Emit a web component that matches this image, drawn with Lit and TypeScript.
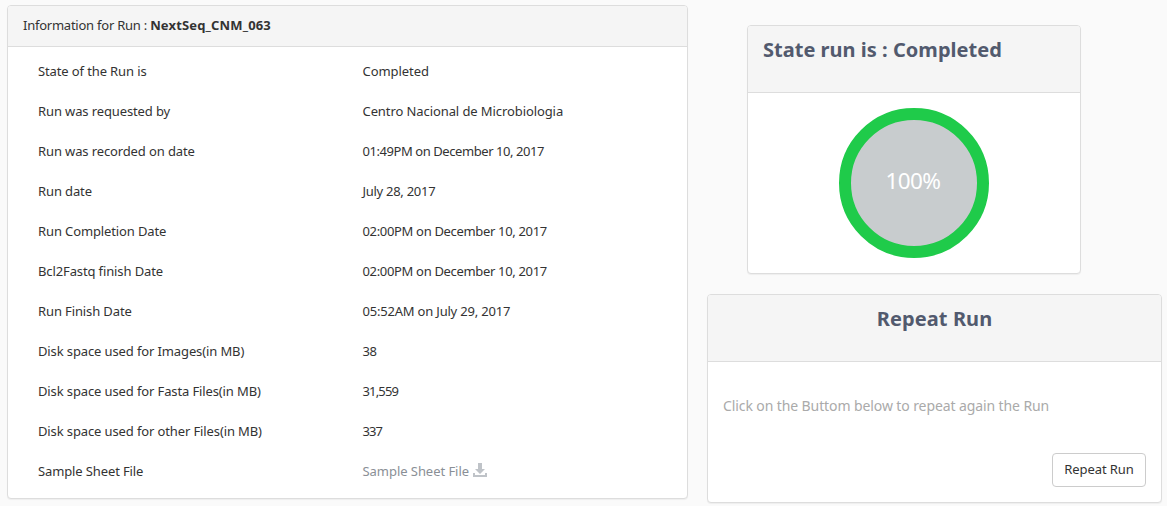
import { LitElement, html, css, svg } from "lit";
import { customElement, property } from "lit/decorators.js";
import { styleMap } from "lit/directives/style-map.js";

interface Row {
  label: string;
  value: string;
  tracking?: number;
  file?: boolean;
}

const rows: Row[] = [
  { label: "State of the Run is", value: "Completed", tracking: -0.05 },
  { label: "Run was requested by", value: "Centro Nacional de Microbiologia", tracking: -0.09 },
  { label: "Run was recorded on date", value: "01:49PM on December 10, 2017", tracking: -0.43 },
  { label: "Run date", value: "July 28, 2017", tracking: -0.28 },
  { label: "Run Completion Date", value: "02:00PM on December 10, 2017", tracking: -0.33 },
  { label: "Bcl2Fastq finish Date", value: "02:00PM on December 10, 2017", tracking: -0.33 },
  { label: "Run Finish Date", value: "05:52AM on July 29, 2017", tracking: -0.2 },
  { label: "Disk space used for Images(in MB)", value: "38", tracking: -0.5 },
  { label: "Disk space used for Fasta Files(in MB)", value: "31,559", tracking: -0.85 },
  { label: "Disk space used for other Files(in MB)", value: "337", tracking: -0.9 },
  { label: "Sample Sheet File", value: "Sample Sheet File", file: true },
];

@customElement("run-panel")
class RunPanel extends LitElement {
  static styles = css`
    :host {
      display: flex;
      flex-direction: column;
      box-sizing: border-box;
      background: #fff;
      border: 1px solid #ddd;
      border-radius: 4px;
      box-shadow: 0 1px 1px rgba(0, 0, 0, 0.05);
      overflow: hidden;
    }
    .head {
      box-sizing: border-box;
      background: #f5f5f5;
      border-bottom: 1px solid #ddd;
      padding: var(--head-top, 10px) 15px 0;
      height: var(--head-height, 67px);
    }
    .body {
      flex: 1;
      display: flex;
      flex-direction: column;
    }
  `;
  render() {
    return html`<div class="head"><slot name="head"></slot></div>
      <div class="body"><slot></slot></div>`;
  }
}

@customElement("progress-ring")
class ProgressRing extends LitElement {
  @property({ type: Number }) value = 0;
  static styles = css`
    :host {
      display: flex;
      align-items: center;
      justify-content: center;
      box-sizing: border-box;
      width: 150px;
      height: 150px;
      border: 12px solid #1fcb4a;
      border-radius: 50%;
      background: #c8ccce;
      color: #fff;
      font-size: 22.5px;
      line-height: 30px;
      padding: 0 2px 4px 0;
      letter-spacing: -0.6px;
    }
  `;
  render() {
    return html`<span>${this.value}%</span>`;
  }
}

@customElement("app-root")
class AppRoot extends LitElement {
  static styles = css`
    :host {
      display: flex;
      align-items: flex-start;
      box-sizing: border-box;
      width: 1167px;
      height: 506px;
      padding: 5px 5px 0 7px;
      gap: 19px;
      overflow: hidden;
      background: #fafafa;
      color: #333;
      font: 13px/20px "Noto Sans", sans-serif;
      letter-spacing: -0.12px;
    }
    .info {
      --head-height: 41px;
      --head-top: 9px;
      width: 681px;
      height: 494px;
    }
    .lead {
      letter-spacing: -0.24px;
    }
    .name {
      letter-spacing: 0.15px;
    }
    .rows {
      display: grid;
      grid-template-columns: 324.5px 1fr;
      grid-auto-rows: 40px;
      align-items: center;
      padding: 4px 0 0 30px;
    }
    .side {
      width: 455px;
      padding-top: 20px;
      display: flex;
      flex-direction: column;
      gap: 20px;
    }
    .state {
      width: 334px;
      height: 249px;
      margin-left: 40px;
    }
    .ring {
      margin: 15px auto 0;
    }
    .repeat {
      height: 209px;
    }
    .title {
      font-size: 20px;
      line-height: 28px;
      font-weight: 700;
      color: #525a6e;
      letter-spacing: 0.02px;
    }
    .centered {
      text-align: center;
      letter-spacing: 0.1px;
    }
    .hint {
      font-size: 14px;
      line-height: 24px;
      color: #aaa;
      padding: 32px 15px 0;
      letter-spacing: -0.1px;
    }
    .actions {
      display: flex;
      justify-content: flex-end;
      padding: 35px 15px 0;
    }
    .button {
      box-sizing: border-box;
      width: 94px;
      height: 34px;
      padding: 0 0 3px;
      border: 1px solid #ccc;
      border-radius: 4px;
      background: #fff;
      color: #333;
      font: inherit;
      letter-spacing: -0.1px;
    }
    .file {
      display: flex;
      align-items: center;
      gap: 4px;
      color: #8a8f96;
      letter-spacing: -0.05px;
    }
    .download {
      width: 14px;
      height: 14px;
      margin-top: -3px;
      fill: #bfc3c8;
    }
  `;

  private file(name: string) {
    return html`<span class="file"
      ><span>${name}</span
      ><svg class="download" viewBox="0 0 14 14">
        ${svg`<path d="M5 0h4v6h3L7 11 2 6h3zM0 10h2v2h10v-2h2v4H0z" />`}
      </svg></span
    >`;
  }

  render() {
    return html`
      <run-panel class="info">
        <div slot="head" class="lead">Information for Run : <b class="name">NextSeq_CNM_063</b></div>
        <div class="rows">
          ${rows.map(
            (r) =>
              html`<span>${r.label}</span>${r.file
                  ? this.file(r.value)
                  : html`<span style=${styleMap({ letterSpacing: `${r.tracking ?? 0}px` })}>${r.value}</span>`}`
          )}
        </div>
      </run-panel>
      <div class="side">
        <run-panel class="state">
          <div slot="head" class="title">State run is : Completed</div>
          <progress-ring class="ring" .value=${100}></progress-ring>
        </run-panel>
        <run-panel class="repeat">
          <div slot="head" class="title centered">Repeat Run</div>
          <div class="hint">Click on the Buttom below to repeat again the Run</div>
          <div class="actions"><button class="button">Repeat Run</button></div>
        </run-panel>
      </div>
    `;
  }
}
